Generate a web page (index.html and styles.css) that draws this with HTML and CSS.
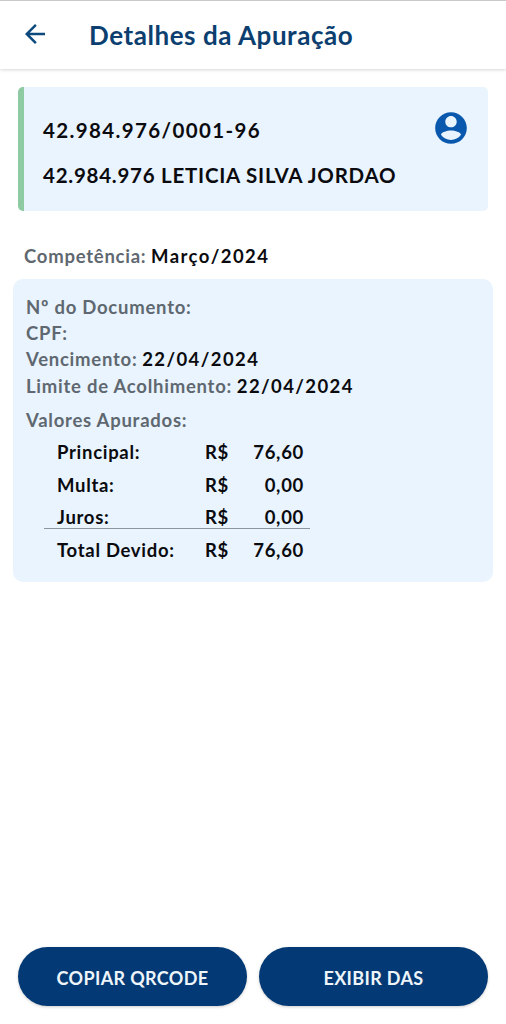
FILE: index.html
```html
<!DOCTYPE html>
<html lang="pt-BR">
<head>
    <meta charset="UTF-8">
    <title>Detalhes da Apuração</title>
    <link rel="stylesheet" href="styles.css">
</head>
<body>
<div class="pagina">
    <div class="topo">
        <svg class="voltar" viewBox="0 0 24 24" width="30" height="30"><path d="M20 11H7.83l5.59-5.59L12 4l-8 8 8 8 1.41-1.41L7.83 13H20z"/></svg>
        <div class="titulo">Detalhes da Apuração</div>
    </div>
    <div class="empresa">
        <div class="empresa_textos">
            <div class="empresa_linha cnpj">42.984.976/0001-96</div>
            <div class="empresa_linha">42.984.976 LETICIA SILVA JORDAO</div>
        </div>
        <svg class="perfil" viewBox="0 0 24 24" width="38" height="38"><path fill-rule="evenodd" d="M12 2C6.48 2 2 6.48 2 12s4.48 10 10 10 10-4.48 10-10S17.52 2 12 2zm0 2.4c2 0 3.6 1.6 3.6 3.6s-1.600 3.600-3.600 3.600S8.400 10 8.400 8 10 4.400 12 4.400zm0 15.100c-2.600 0-4.900-1.300-6.300-3.300C5.800 14.500 9.500 13.500 12 13.500s6.200 1 6.300 2.700c-1.400 2-3.700 3.300-6.300 3.300z"/></svg>
    </div>
    <div class="competencia"><span class="rotulo">Competência:</span> <b>Março/2024</b></div>
    <div class="detalhes">
        <div class="linha"><span class="rotulo">Nº do Documento:</span></div>
        <div class="linha"><span class="rotulo">CPF:</span></div>
        <div class="linha"><span class="rotulo">Vencimento:</span> <b>22/04/2024</b></div>
        <div class="linha"><span class="rotulo">Limite de Acolhimento:</span> <b>22/04/2024</b></div>
        <div class="linha valores"><span class="rotulo">Valores Apurados:</span></div>
        <div class="tabela">
            <div class="valor"><span class="nome">Principal:</span><span class="moeda">R$</span><span class="numero">76,60</span></div>
            <div class="valor"><span class="nome">Multa:</span><span class="moeda">R$</span><span class="numero">0,00</span></div>
            <div class="valor com_linha"><span class="nome">Juros:</span><span class="moeda">R$</span><span class="numero">0,00</span></div>
            <div class="valor total"><span class="nome">Total Devido:</span><span class="moeda">R$</span><span class="numero">76,60</span></div>
        </div>
    </div>
    <div class="botoes">
        <div class="boton">COPIAR QRCODE</div>
        <div class="boton">EXIBIR DAS</div>
    </div>
</div>
</body>
</html>
```

FILE: styles.css
```css
* {
    box-sizing: border-box;
}
body {
    margin: 0;
    background-color: #fff;
    font-family: Lato, "Noto Sans", sans-serif;
    color: #0b0b0f;
}
b {
    font-weight: 700;
    letter-spacing: 1.4px;
}
.pagina {
    height: 1024px;
    display: flex;
    flex-direction: column;
    overflow: hidden;
}
.topo {
    height: 69px;
    display: flex;
    align-items: center;
    padding: 0 0 0 20px;
    border-top: 1px solid #c9c9c9;
    box-shadow: 0 1px 3px rgba(0, 0, 0, 0.16);
}
.voltar {
    fill: #0c4a7e;
    margin-top: -2px;
}
.titulo {
    margin-left: 39px;
    font-size: 26px;
    font-weight: 700;
    color: #0c3f70;
    letter-spacing: 0.55px;
}
.empresa {
    margin: 18px 18px 0;
    height: 124px;
    display: flex;
    justify-content: space-between;
    padding: 21px 18px 0 19px;
    background-color: #e9f4fe;
    border-left: 6px solid #8ecba2;
    border-radius: 5px;
}
.empresa_linha {
    font-size: 20.5px;
    font-weight: 700;
    line-height: 45px;
    letter-spacing: 0.75px;
}
.cnpj {
    letter-spacing: 1.37px;
}
.perfil {
    fill: #0a58ae;
    margin-top: 1px;
}
.competencia {
    margin: 33px 0 0 24px;
    font-size: 18.5px;
    line-height: 24px;
}
.rotulo {
    color: #5f6870;
    font-weight: 700;
    letter-spacing: 0.75px;
}
.detalhes {
    margin: 11px 13px 0;
    height: 303px;
    padding: 15px 13px 0;
    background-color: #e9f4fe;
    border-radius: 10px;
    font-size: 18.5px;
}
.linha {
    line-height: 26.2px;
}
.valores {
    margin-top: 8px;
}
.tabela {
    width: 266px;
    margin: 3px 0 0 18px;
}
.valor {
    display: flex;
    height: 32.5px;
    line-height: 32px;
    padding: 0 6px 0 13px;
    font-weight: 700;
    letter-spacing: 0.7px;
}
.com_linha {
    height: 28px;
    border-bottom: 1.5px solid #8c969e;
}
.total {
    padding-top: 5px;
    height: 37px;
}
.nome {
    width: 148px;
}
.moeda {
    width: 30px;
}
.numero {
    flex: 1;
    text-align: right;
}
.botoes {
    margin-top: auto;
    margin-bottom: 18px;
    padding: 0 18px;
    display: flex;
    gap: 12px;
}
.boton {
    flex: 1;
    height: 59px;
    line-height: 62px;
    text-align: center;
    background-color: #033a75;
    color: #eef5fa;
    font-size: 18px;
    font-weight: 700;
    letter-spacing: 0.35px;
    border-radius: 30px;
    box-shadow: 0 1px 3px rgba(0, 0, 0, 0.2);
}
```
